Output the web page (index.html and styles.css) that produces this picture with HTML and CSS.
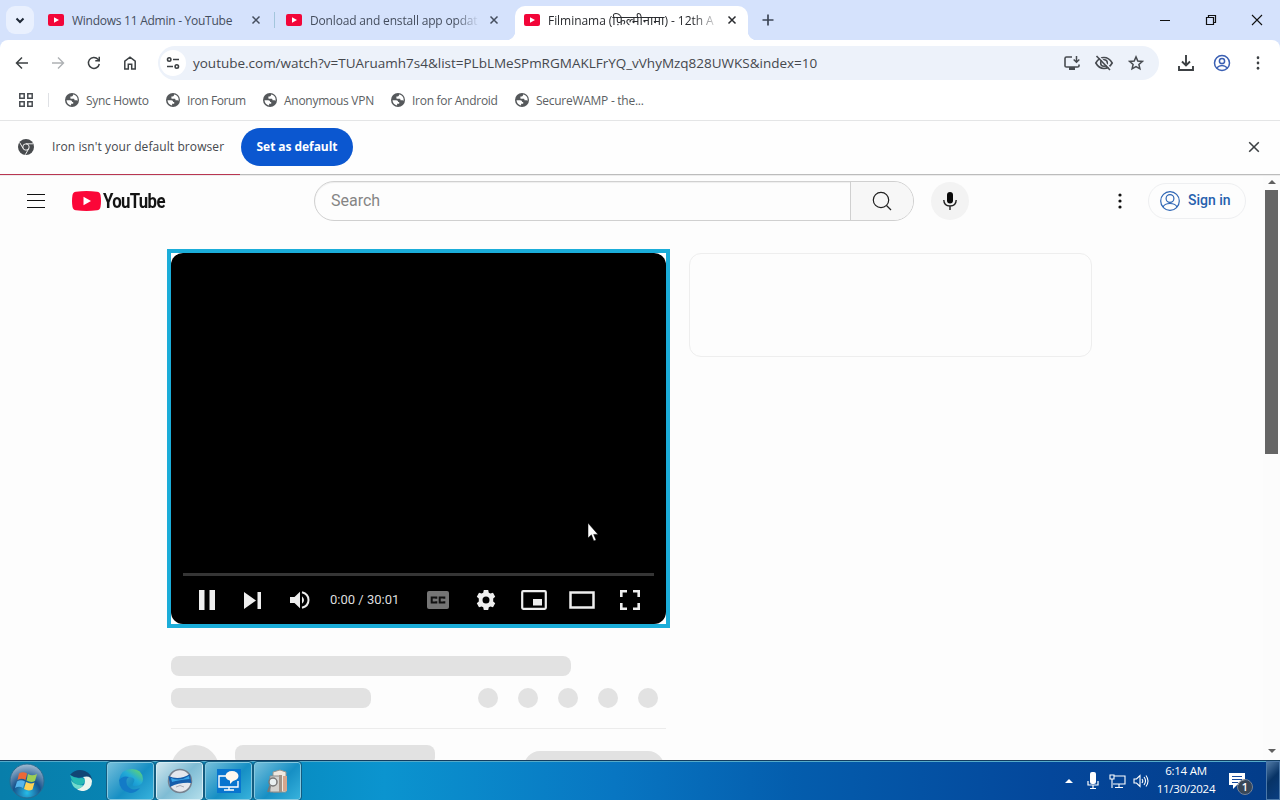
FILE: index.html
```html
<!DOCTYPE html>
<html lang="en">
<head>
<meta charset="utf-8">
<title>Filminama - YouTube</title>
<link rel="stylesheet" href="styles.css">
</head>
<body>
<svg class="defs" width="0" height="0">
  <defs>
    <symbol id="yt" viewBox="0 0 16 12"><rect width="16" height="12" rx="2" fill="#f20639"/><path d="M6 3.2 11 6 6 8.8z" fill="#fff"/></symbol>
    <symbol id="x" viewBox="0 0 10 10"><path d="M1.500 1.500l7 7M8.500 1.500l-7 7" stroke="currentColor" stroke-width="1.500" fill="none"/></symbol>
    <symbol id="globe" viewBox="0 0 14 14"><circle cx="7" cy="7" r="7" fill="#55585b"/><path d="M1.500 7.200h3.600c1.500 0 2 .8 2 1.800h1.100v1.700H6.100v1.700C3.500 12 1.600 9.800 1.500 7.200zM8 1.600c0 1.500-.5 1.800-1.400 1.800H5.400v1.500c0 .8.600.9 1.400.9h1.700c.9 0 1 .6 1 1.500h2c.6 0 .9.400.9.900 1-3-1-6.400-4.400-6.600z" fill="#fff"/></symbol>
    <symbol id="dots" viewBox="0 0 4 16"><circle cx="2" cy="2" r="1.600"/><circle cx="2" cy="8" r="1.600"/><circle cx="2" cy="14" r="1.600"/></symbol>
  </defs>
</svg>

<header class="tabstrip">
  <button class="tab-search"><svg width="10" height="7" viewBox="0 0 10 7"><path d="M1.500 1.500 5 5l3.500-3.500" fill="none" stroke="#1f2937" stroke-width="2"/></svg></button>
  <div class="tab tab-first"><svg width="16" height="12"><use href="#yt"/></svg><span class="tab-title t1">Windows 11 Admin - YouTube</span><svg class="close" width="10" height="10"><use href="#x"/></svg></div>
  <i class="tab-sep"></i>
  <div class="tab tab-second"><svg width="16" height="12"><use href="#yt"/></svg><span class="tab-title t2">Donload and enstall app opdat</span><svg class="close" width="10" height="10"><use href="#x"/></svg></div>
  <div class="tab tab-active"><svg width="16" height="12"><use href="#yt"/></svg><span class="tab-title t3">Filminama (<span class="deva">फ़िल्मीनामा</span>) - 12th A</span><svg class="close" width="10" height="10"><use href="#x"/></svg></div>
  <svg class="plus" width="12" height="12" viewBox="0 0 12 12"><path d="M6 .5v11M.5 6h11" stroke="#3d4656" stroke-width="1.700"/></svg>
  <div class="window-controls">
    <svg width="12" height="12" viewBox="0 0 12 12"><path d="M1 6.500h10" stroke="#111"/></svg>
    <svg width="12" height="12" viewBox="0 0 12 12"><path d="M1.500 3.500h7v7h-7zM3.500 3V1.500h7v7H9" fill="none" stroke="#111" stroke-width="1.200"/></svg>
    <svg width="12" height="12" viewBox="0 0 12 12"><path d="M1 1l10 10M11 1 1 11" stroke="#111" stroke-width="1.100"/></svg>
  </div>
</header>

<section class="chrome">
  <div class="toolbar">
    <div class="nav">
      <svg width="16" height="16" viewBox="0 0 16 16"><path d="M14 8H3M8 2.500 2.500 8 8 13.500" fill="none" stroke="#3c4043" stroke-width="1.500"/></svg>
      <svg width="16" height="16" viewBox="0 0 16 16"><path d="M2 8h11M8 2.500 13.500 8 8 13.500" fill="none" stroke="#aeb1b4" stroke-width="1.400"/></svg>
      <svg width="16" height="16" viewBox="0 0 16 16"><path d="M13.300 9A5.500 5.500 0 1 1 12 4.200L13.500 6" fill="none" stroke="#3c4043" stroke-width="1.500"/><path d="M14 1.800v4.700H9.300V5h3.200V1.800z" fill="#3c4043"/></svg>
      <svg width="16" height="16" viewBox="0 0 16 16"><path d="M2.800 14V6.200L8 2.200l5.200 4V14H9.700V9.200H6.300V14z" fill="none" stroke="#3c4043" stroke-width="1.500"/></svg>
    </div>
    <div class="omnibox">
      <span class="site"><svg width="14" height="14" viewBox="0 0 14 14"><g fill="none" stroke="#3c4043" stroke-width="1.600"><circle cx="3.200" cy="3.500" r="1.700"/><path d="M7 3.500h6M1 10.500h6"/><circle cx="10.800" cy="10.500" r="1.700"/></g></svg></span>
      <span class="url">youtube.com/watch?v=TUAruamh7s4&amp;list=PLbLMeSPmRGMAKLFrYQ_vVhyMzq828UWKS&amp;index=10</span>
      <div class="omni-icons">
        <svg width="18" height="16" viewBox="0 0 18 16"><path d="M9 2H3.500Q2 2 2 3.500v7.500Q2 12 3.500 12h11Q16 12 16 11V9.500" fill="none" stroke="#474b50" stroke-width="1.600"/><path d="M6 12h6v3H6z" fill="#474b50"/><path d="M13.500 1v6M10.700 4.500l2.800 2.800 2.800-2.800" fill="none" stroke="#474b50" stroke-width="1.500"/></svg>
        <svg width="20" height="18" viewBox="0 0 20 18"><path d="M1.800 9Q5 3.500 10 3.500T18.200 9Q15 14.500 10 14.500T1.800 9z" fill="none" stroke="#474b50" stroke-width="1.600"/><circle cx="10" cy="9" r="3.300" fill="none" stroke="#474b50" stroke-width="1.600"/><path d="M4 1.500 17 15" stroke="#edf1fa" stroke-width="1.600"/><path d="M2.500 2 16 16" stroke="#474b50" stroke-width="1.600"/></svg>
        <svg width="16" height="16" viewBox="0 0 16 16"><path d="M8 1.900l1.800 4.100 4.500.4-3.400 3 1 4.400L8 11.500l-3.900 2.300 1-4.400-3.400-3 4.500-.4z" fill="none" stroke="#474b50" stroke-width="1.500"/></svg>
      </div>
    </div>
    <div class="actions">
      <svg width="18" height="18" viewBox="0 0 18 18"><path d="M9 1v10M5 7.500l4 4 4-4M2 12v4h14v-4" fill="none" stroke="#3c4043" stroke-width="1.900"/></svg>
      <svg width="18" height="18" viewBox="0 0 18 18"><g fill="none" stroke="#3a5fb3" stroke-width="1.500"><circle cx="9" cy="9" r="7.500"/><circle cx="9" cy="7" r="2.600"/><path d="M3.500 14Q9 9 14.500 14"/></g></svg>
      <svg width="4" height="14" viewBox="0 0 4 16" fill="#3c4043"><use href="#dots"/></svg>
    </div>
  </div>
  <nav class="bookmarks">
    <svg class="apps" width="14" height="14" viewBox="0 0 14 14"><path d="M.8.800h4.400v4.400H.8zM8.800.800h4.400v4.400H8.800zM.8 8.800h4.400v4.400H.8zM8.800 8.800h4.400v4.400H8.800z" fill="none" stroke="#474b50" stroke-width="1.500"/></svg>
    <i class="bm-sep"></i>
    <a class="bm b1"><svg width="14" height="14"><use href="#globe"/></svg><span>Sync Howto</span></a>
    <a class="bm b2"><svg width="14" height="14"><use href="#globe"/></svg><span>Iron Forum</span></a>
    <a class="bm b3"><svg width="14" height="14"><use href="#globe"/></svg><span>Anonymous VPN</span></a>
    <a class="bm b4"><svg width="14" height="14"><use href="#globe"/></svg><span>Iron for Android</span></a>
    <a class="bm b5"><svg width="14" height="14"><use href="#globe"/></svg><span>SecureWAMP - the...</span></a>
  </nav>
</section>

<section class="infobar">
  <svg width="16" height="16" viewBox="0 0 16 16"><circle cx="8" cy="8" r="8" fill="#484b4e"/><g fill="none" stroke="#eee" stroke-width="1"><circle cx="8" cy="8" r="3.200"/><path d="M8 4.800h7M5.200 9.600 1.700 3.600M10.800 9.600 7.300 15.700"/></g></svg>
  <span class="info-text">Iron isn't your default browser</span>
  <button class="set-default">Set as default</button>
  <svg class="info-close" width="12" height="12" viewBox="0 0 10 10"><path d="M1 1l8 8M9 1 1 9" stroke="#3c4043" stroke-width="1.300"/></svg>
</section>
<div class="loading"><i></i></div>

<div class="viewport">
  <div class="page">
    <header class="masthead">
      <svg class="menu" width="18" height="14" viewBox="0 0 18 14"><path d="M0 .5h18M0 6.500h18M0 13.500h18" stroke="#111"/></svg>
      <div class="logo"><svg width="29" height="20" viewBox="0 0 29 20"><path d="M4 .7Q14.500-.5 25 .7 28 1 28.500 4q1 6 0 12-.5 3-3.500 3.300-10.500 1.200-21 0Q1 19 .5 16-.5 10 .5 4 1 1 4 .7z" fill="#fb0638"/><path d="M11.500 5.800 19 10l-7.500 4.200z" fill="#fff"/></svg><span>YouTube</span></div>
      <div class="search"><span>Search</span><button><svg width="20" height="20" viewBox="0 0 20 20"><circle cx="9" cy="9" r="7.700" fill="none" stroke="#222" stroke-width="1.200"/><path d="M14.500 14.500 19 19" stroke="#222" stroke-width="1.300"/></svg></button></div>
      <div class="mic"><svg width="14" height="18" viewBox="0 0 14 18"><rect x="4" width="6" height="11.500" rx="3" fill="#090909"/><path d="M.8 8Q1 14 7 14t6.200-6M7 14v4" fill="none" stroke="#222" stroke-width="1.400"/></svg></div>
      <svg class="more" width="4" height="16"><use href="#dots"/></svg>
      <button class="signin"><svg width="20" height="20" viewBox="0 0 20 20"><g fill="none" stroke="#2d65b4" stroke-width="1.200"><circle cx="10" cy="10" r="9.300"/><circle cx="10" cy="7.500" r="3.900"/><path d="M3 16Q4.500 12.500 10 12.500T17 16"/></g></svg><span>Sign in</span></button>
    </header>
    <main class="watch">
      <div class="primary">
        <div class="player">
          <div class="screen">
            <div class="progress"></div>
            <div class="controls">
              <svg class="c-pause" width="16" height="20" viewBox="0 0 16 20"><path d="M0 0h5.500v20H0zM10.500 0H16v20h-5.500z"/></svg>
              <svg class="c-next" width="17" height="17" viewBox="0 0 17 17"><path d="M0 0 12 8.500 0 17zM13.500 0H17v17h-3.500z"/></svg>
              <svg class="c-volume" width="20" height="18" viewBox="0 0 20 18"><path d="M0 6h4.500L10 .8v16.400L4.500 12H0z"/><path d="M12 5.200q4 3.800 0 7.600z"/><path d="M12 1.200q6.500 1.700 6.500 7.800T12 16.800" fill="none" stroke="#eee" stroke-width="2"/></svg>
              <span class="time">0:00 / 30:01</span>
              <svg class="c-cc" width="22" height="18" viewBox="0 0 22 18"><rect width="22" height="18" rx="2" fill="#757575"/><path d="M9.300 7.700V6.500H4.700v5h4.600v-1.200M17.300 7.700V6.500h-4.600v5h4.600v-1.200" fill="none" stroke="#101010" stroke-width="2"/></svg>
              <svg class="c-gear" width="20" height="20" viewBox="0 0 20 20"><path fill-rule="evenodd" d="M7.800 0h4.400l.6 2.700 1.600.9L17 2.800l2.200 3.900-2 1.900v2.800l2 1.900-2.200 3.900-2.600-.8-1.600.9-.6 2.700H7.800l-.6-2.700-1.600-.9-2.600.8L.8 13.300l2-1.900V8.600l-2-1.900L3 2.800l2.600.8 1.600-.9zM10 6.500a3.500 3.500 0 1 0 0 7 3.500 3.500 0 0 0 0-7z"/></svg>
              <svg class="c-pip" width="26" height="20" viewBox="0 0 26 20"><rect x="1.200" y="1.200" width="23.600" height="17.600" rx="1" fill="none" stroke="#eee" stroke-width="2.200"/><path d="M12 9h9v6.500h-9z"/></svg>
              <svg class="c-theater" width="26" height="18" viewBox="0 0 26 18"><rect x="1.500" y="1.500" width="23" height="15" fill="none" stroke="#eee" stroke-width="2.500"/></svg>
              <svg class="c-full" width="20" height="20" viewBox="0 0 20 20"><path d="M1.300 7V1.300H7M13 1.300h5.700V7M18.700 13v5.700H13M7 18.700H1.300V13" fill="none" stroke="#eee" stroke-width="2.600"/></svg>
            </div>
            <svg class="cursor" width="12" height="20" viewBox="0 0 12 20"><path d="M1 1v15l3.400-3.200L6.800 19l2.300-1-2.400-5.600H11z" fill="#fff" stroke="#000" stroke-width=".5"/></svg>
          </div>
        </div>
        <div class="skeleton">
          <div class="bar title"></div>
          <div class="row"><div class="bar views"></div><div class="circles"><i></i><i></i><i></i><i></i><i></i></div></div>
          <div class="channel"><i class="avatar"></i><i class="bar name"></i><i class="bar subscribe"></i></div>
        </div>
      </div>
      <aside class="panel"></aside>
    </main>
  </div>
  <div class="scrollbar"><i class="up"></i><i class="thumb"></i><i class="down"></i></div>
</div>

<footer class="taskbar">
  <div class="start"><svg width="36" height="36" viewBox="0 0 36 36"><defs><radialGradient id="orb" cx=".5" cy=".85" r=".9"><stop offset="0" stop-color="#27bde8"/><stop offset=".45" stop-color="#17538d"/><stop offset="1" stop-color="#b7cadb"/></radialGradient></defs><circle cx="18" cy="18" r="17" fill="url(#orb)" stroke="#286c91"/><path d="M10 10.500q4-2.500 8 0L16.500 17q-4-2.500-8 0z" fill="#ed6836"/><path d="M19 11q4 2.500 9 0l-2 7q-4 2-8.500-.5z" fill="#9dce55"/><path d="M8 18.500q4-2.500 8 0L14 25q-4-2.500-8 0z" fill="#55b5ec"/><path d="M17 19q4.500 2.500 8.500.5l-2 7q-4 2-8.500-.5z" fill="#ffd254"/></svg></div>
  <div class="pin"><svg width="26" height="26" viewBox="0 0 26 26"><path d="M2 7Q8 0 17 3q7 3 7 10-4-5-9-4Q9 11 2 7z" fill="#124675"/><path d="M2 7q5 4 11 3 4 0 4 3-1 4-6 4-7-1-9-10z" fill="#26b9b4"/><path d="M15 9q8-2 9 4 0 8-8 10-5 0-7-2 8-2 8-8 0-3-2-4z" fill="#edf5ee"/><path d="M3 12q4 6 12 5-2 4-6 4-5-2-6-9z" fill="#71dacb"/></svg></div>
  <div class="task"><svg width="26" height="26" viewBox="0 0 26 26"><defs><linearGradient id="edge" x1="0" y1="1" x2="1" y2="0"><stop stop-color="#087bd0"/><stop offset=".55" stop-color="#24add6"/><stop offset="1" stop-color="#70dc58"/></linearGradient></defs><path d="M1 12Q3 1 14 1q10 0 11 10 0 7-8 7-3 0-2-2 4-6-3-7Q3 9 1 12z" fill="url(#edge)"/><path d="M1 12q4-5 10-3-4 2-2 8 4 7 13 3-4 5-10 5Q1 23 1 12z" fill="#137bc7"/></svg></div>
  <div class="task current"><svg width="26" height="26" viewBox="0 0 26 26"><circle cx="13" cy="13" r="11.500" fill="#e4e7ed" stroke="#77818e" stroke-width="1.500"/><path d="M1.500 8Q12 13 23 6l1.500 9Q13 14 3 19z" fill="#155dab"/><path d="M4 10q9 4 18-2l.5 3Q12 12 5 14z" fill="#3aa6e8"/><path d="M9 19q4-3 8 0" fill="none" stroke="#a7aab5"/></svg></div>
  <div class="task"><svg width="24" height="24" viewBox="0 0 24 24"><rect width="24" height="24" fill="#0875cf"/><path d="M9 7H2v11h19v-6M12 18v3M7 21h10" fill="none" stroke="#fff" stroke-width="1.400"/><ellipse cx="15" cy="7" rx="6.500" ry="5" fill="#fff8ee"/><path d="M13 10v5l4-4z" fill="#fff8ee"/></svg></div>
  <div class="task"><svg width="24" height="26" viewBox="0 0 24 26"><path d="M7 4 14 2l6 2v20H7z" fill="#f0e8df" stroke="#97958f"/><path d="M4 8h10v16H4z" fill="#d4d2ce" stroke="#8a8a8a"/><path d="M13 7h3v17h-3z" fill="#a39386"/><path d="M17 8h4v15h-4z" fill="#d5a68d"/><circle cx="7" cy="14" r="4" fill="#e9f0f1" stroke="#777" stroke-width="1.500"/><path d="M4 18 2 24" stroke="#777" stroke-width="2"/></svg></div>
  <div class="tray">
    <svg class="tray-up" width="8" height="5" viewBox="0 0 8 5"><path d="M0 5 4 1l4 4z" fill="#fff"/></svg>
    <svg class="tray-mic" width="12" height="18" viewBox="0 0 12 18"><rect x="3" y="0" width="6" height="12" rx="2" fill="#fff"/><path d="M1 9v4h10V9M6 13v4M3 16.500h6" fill="none" stroke="#fff" stroke-width="1.200"/></svg>
    <svg class="tray-net" width="17" height="16" viewBox="0 0 17 16"><path d="M5.500 3H16v8H4M10 11v3M6 14.500h8M1 2h4v4H1zM3 6v9" fill="none" stroke="#fff" stroke-width="1.100"/></svg>
    <svg class="tray-volume" width="16" height="14" viewBox="0 0 16 14"><path d="M1 5h2.500L7 1.500v11L3.500 9H1zM9 5q1.500 2 0 4M11 3q3 4 0 8M13 1.500q4 5.500 0 11" fill="none" stroke="#fff" stroke-width="1.100"/></svg>
    <div class="clock"><span>6:14 AM</span><span>11/30/2024</span></div>
    <div class="notice"><svg width="17" height="17" viewBox="0 0 17 17"><path d="M0 1h16v12H8l-4 4v-4H0z" fill="#fff"/><path d="M3 4.500h10M3 7.500h10M3 10.500h6" stroke="#174a9c"/></svg><b>1</b></div>
    <i class="show-desktop"></i>
  </div>
</footer>
</body>
</html>
```

FILE: styles.css
```css
* { box-sizing: border-box; }
body {
  margin: 0;
  width: 1280px;
  height: 800px;
  overflow: hidden;
  display: flex;
  flex-direction: column;
  background: #fdfdfd;
  font: 12px "Open Sans", "Noto Sans", sans-serif;
  color: #45484d;
}
svg { display: block; flex: none; }
i { display: block; flex: none; }
button { border: 0; padding: 0; margin: 0; font: inherit; color: inherit; }
.defs { position: absolute; }

/* Tab strip */
.tabstrip { height: 40px; flex: none; background: #d5e2fc; display: flex; align-items: center; color: #454e5e; }
.tab-search { width: 28px; height: 28px; margin-left: 6px; border-radius: 9px; background: #e9f0fe; display: grid; place-items: center; }
.tab { display: flex; align-items: center; height: 40px; }
.tab-first { margin-left: 14px; width: 213px; }
.tab-second { width: 213px; margin-left: 11px; }
.tab-sep { width: 1px; height: 16px; background: #a3c6dc; margin-left: 13px; }
.tab-title { margin-left: 8px; width: 170px; white-space: nowrap; }
.t1 { letter-spacing: -.26px; }
.t2 { letter-spacing: -.17px; mask-image: linear-gradient(90deg, #000 145px, transparent 170px); }
.t3 { mask-image: linear-gradient(90deg, #000 145px, transparent 172px); letter-spacing: -.05px; }
.deva { font-family: "Noto Sans", "Noto Sans Devanagari", sans-serif; font-size: 13px; line-height: 1; }
.close { margin-left: auto; }
.tab-active { position: relative; width: 233px; height: 34px; margin: 6px 0 0 16px; padding: 0 11px 6px 9px; border-radius: 10px 10px 0 0; background: #fff; color: #292b2f; }
.tab-active::before, .tab-active::after { content: ""; position: absolute; bottom: 0; width: 9px; height: 9px; }
.tab-active::before { left: -9px; background: radial-gradient(circle at 0 0, transparent 9px, #fff 9.5px); }
.tab-active::after { right: -9px; background: radial-gradient(circle at 100% 0, transparent 9px, #fff 9.5px); }
.plus { margin-left: 14px; }
.window-controls { margin-left: auto; display: flex; gap: 34px; padding-right: 17px; }

/* Toolbar */
.chrome { height: 81px; flex: none; background: #fff; border-bottom: 1px solid #e4e5e6; border-radius: 8px 8px 0 0; box-shadow: 0 -8px 0 #d5e2fc; clip-path: inset(0 0 0 0); }
.toolbar { height: 46px; display: flex; align-items: center; }
.nav { display: flex; gap: 20px; padding-left: 14px; }
.omnibox { width: 1001px; height: 34px; margin-left: 20px; border-radius: 17px; background: #edf2fa; display: flex; align-items: center; }
.site { width: 26px; height: 26px; margin-left: 2px; border-radius: 50%; background: #fff; display: grid; place-items: center; }
.url { margin-left: 7px; font-size: 13.5px; letter-spacing: -.01px; white-space: nowrap; }
.omni-icons { margin-left: auto; padding-right: 15px; display: flex; align-items: center; gap: 13px; }
.omni-icons svg:last-child { margin-left: 1px; }
.actions { display: flex; align-items: center; margin-left: 18px; gap: 18px; }
.actions svg:last-child { margin-left: 7px; }
.bookmarks { height: 28px; display: flex; align-items: center; color: #5c5f64; letter-spacing: -.27px; }
.apps { margin-left: 19px; }
.bm-sep { width: 1px; height: 14px; margin-left: 15px; background: #dfe1e5; }
.bm { display: flex; align-items: center; gap: 7px; white-space: nowrap; }
.b1 { margin-left: 16px; width: 101px; letter-spacing: -.3px; }
.b2 { width: 97px; letter-spacing: -.4px; }
.b3 { width: 128px; }
.b4 { width: 124px; }

/* Default browser notice */
.infobar { height: 53px; flex: none; background: #fefefe; display: flex; align-items: center; padding: 0 20px 2px 18px; }
.info-text { margin-left: 18px; width: 173px; letter-spacing: .09px; white-space: nowrap; }
.set-default { width: 112px; height: 38px; margin-left: 16px; border-radius: 19px; background: #0b57d0; color: #fff; font-weight: 700; letter-spacing: -.06px; }
.info-close { margin-left: auto; }
.loading { height: 2px; flex: none; background: #bcbcbc; border-bottom: 1px solid #ececec; }
.loading i { width: 240px; height: 1px; background: #b93652; }

/* Page */
.viewport { flex: 1; min-height: 0; display: flex; overflow: hidden; }
.page { width: 1263px; overflow: hidden; }
.masthead { height: 50px; display: flex; align-items: center; font-family: Roboto, sans-serif; }
.menu { margin-left: 27px; }
.logo { display: flex; align-items: center; margin-left: 27px; width: 94px; gap: 2px; color: #141414; }
.logo span { font: 700 20px/20px Roboto, sans-serif; transform: scaleX(.84); transform-origin: left center; letter-spacing: -.8px; }
.search { margin-left: 148px; width: 600px; height: 40px; border: 1px solid #d0d0d0; border-radius: 20px; display: flex; align-items: center; overflow: hidden; box-shadow: inset 0 1px 1px #eee; }
.search span { flex: 1; padding: 0 0 2px 16px; font-size: 16px; color: #858585; }
.search button { width: 63px; height: 38px; border-left: 1px solid #d0d0d0; background: #f7f7f7; display: grid; place-items: center; }
.mic { width: 38px; height: 38px; margin-left: 17px; border-radius: 50%; background: #f3f3f3; display: grid; place-items: center; }
.more { margin-left: 149px; fill: #111; }
.signin { width: 98px; height: 36px; margin-left: 26px; border: 1px solid #eeeff1; border-radius: 18px; background: transparent; display: flex; align-items: center; padding-left: 11px; gap: 8px; color: #2560ad; font: 500 14px Roboto, sans-serif; white-space: nowrap; }
.signin span { padding-bottom: 2px; }
.watch { display: flex; padding: 23px 0 0 167px; }
.primary { width: 503px; }
.player { height: 379px; border: 4px solid #1badd9; background: #fff; }
.screen { position: relative; height: 371px; border-radius: 12px; background: #000; padding: 320px 12px 0; }
.progress { height: 3px; background: #353535; }
.controls { height: 48px; display: flex; align-items: center; padding: 0 13px 0 16px; fill: #eee; }
.c-next { margin-left: 29px; }
.c-volume { margin-left: 29px; }
.time { width: 70px; margin-left: 20px; padding-bottom: 1px; color: #dedede; font: 13px Roboto, sans-serif; white-space: nowrap; }
.c-cc { margin-left: 27px; }
.c-gear { margin-left: 27px; }
.c-pip { margin-left: 25px; }
.c-theater { margin-left: 22px; }
.c-full { margin-left: 25px; }
.cursor { position: absolute; left: 416px; top: 269px; }
.skeleton { padding: 28px 4px 0; }
.bar { background: #e2e2e2; border-radius: 8px; height: 20px; }
.title { width: 400px; }
.row { display: flex; justify-content: space-between; margin-top: 12px; padding-right: 8px; }
.views { width: 200px; }
.circles { display: flex; gap: 20px; }
.circles i { width: 20px; height: 20px; border-radius: 50%; background: #e2e2e2; }
.channel { margin-top: 20px; padding-top: 16px; border-top: 1px solid #ececec; display: flex; align-items: flex-start; }
.avatar { width: 48px; height: 48px; border-radius: 50%; background: #e2e2e2; }
.name { width: 200px; margin-left: 16px; }
.subscribe { width: 140px; height: 36px; margin: 6px 2px 0 auto; border-radius: 16px; }
.panel { width: 403px; height: 104px; margin: 4px 0 0 19px; border: 1px solid #eee; border-radius: 12px; }
.scrollbar { width: 17px; height: 584px; display: flex; flex-direction: column; align-items: center; background: #fcfcfc; padding-top: 4px; }
.up { border: 4px solid transparent; border-top: 0; border-bottom-color: #606060; }
.thumb { width: 13px; height: 264px; margin-top: 6px; background: #656565; }
.down { margin: auto 0 7px; border: 4px solid transparent; border-bottom: 0; border-top-color: #606060; }

/* Taskbar */
.taskbar { height: 40px; flex: none; border-top: 1px solid #123d60; box-shadow: inset 0 1px #55aac9; background: linear-gradient(90deg, #087eaa 0, #078abd 20%, #0b94cf 30%, #0876c2 48%, #045dad 62%, #04479b 82%, #033c89); display: flex; align-items: center; }
.start { margin-left: 9px; width: 54px; }
.pin { margin-left: 5px; width: 39px; }
.task { width: 47px; height: 38px; margin-right: 2px; border: 1px solid #85c9e1; border-radius: 3px; outline: 1px solid #135c80; background: linear-gradient(135deg, #75bfdb, #168fc4 55%, #37b2dc); display: grid; place-items: center; }
.task.current { background: linear-gradient(135deg, #d0e6ee, #7fbcd4 50%, #b3deeb); border-color: #d5edf5; }
.tray { height: 39px; margin-left: auto; display: flex; align-items: center; color: #fff; }
.tray-mic { margin-left: 14px; }
.tray-net { margin-left: 10px; }
.tray-volume { margin-left: 7px; }
.clock { margin-left: 7px; width: 60px; padding-bottom: 2px; display: flex; flex-direction: column; align-items: center; font: 11.5px/18px "Open Sans", sans-serif; letter-spacing: -.25px; white-space: nowrap; }
.notice { position: relative; margin-left: 13px; width: 25px; }
.notice b { position: absolute; left: 9px; top: 8px; width: 14px; height: 14px; border-radius: 50%; background: #394756; outline: 1px solid #7b8390; font: 600 11px/14px "Open Sans", sans-serif; text-align: center; }
.show-desktop { width: 14px; height: 39px; margin-left: 12px; border: 1px solid #4b78a9; background: linear-gradient(135deg, #517aa5, #073366 45%, #0a3e80); }
```
